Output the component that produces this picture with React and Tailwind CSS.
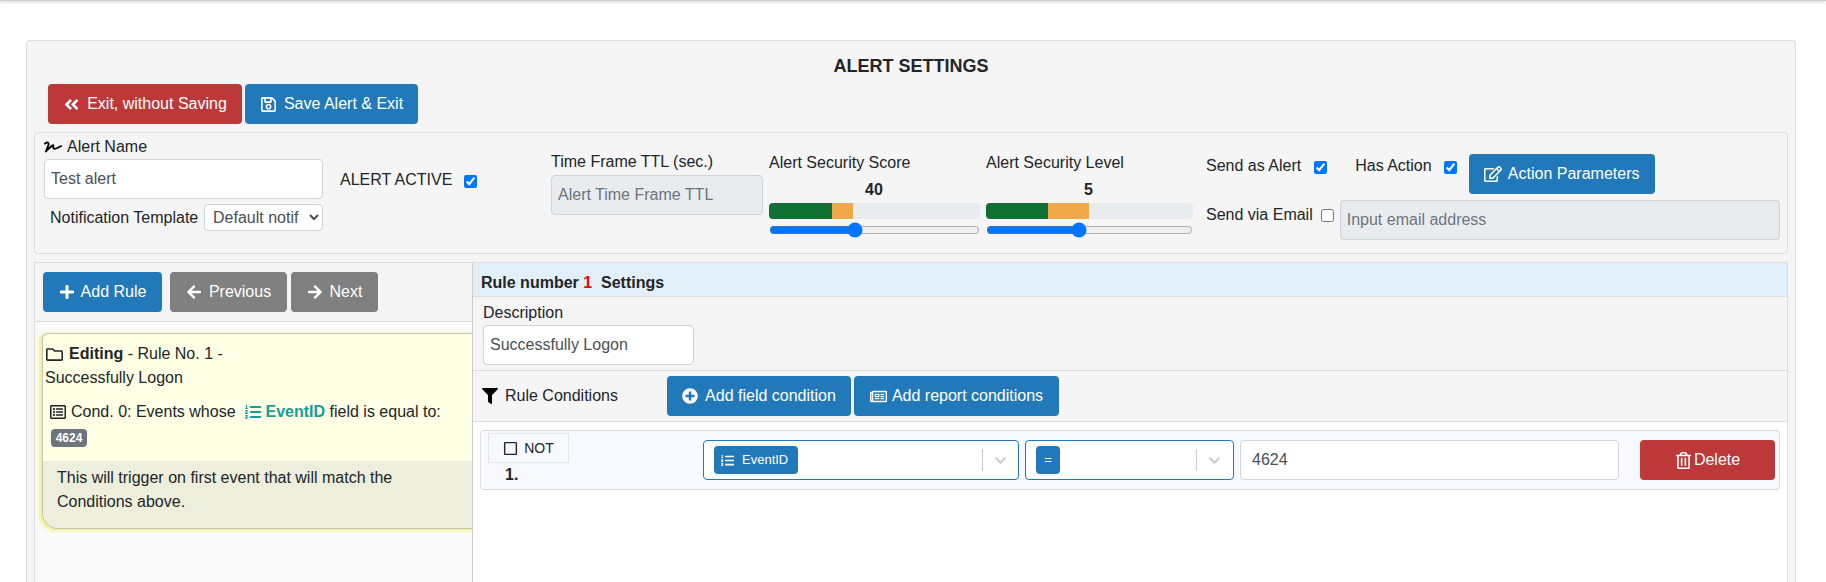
import {
  FaAngleDoubleLeft,
  FaArrowLeft,
  FaArrowRight,
  FaChevronDown,
  FaFilter,
  FaListOl,
  FaPlus,
  FaPlusCircle,
  FaRegEdit,
  FaRegFolder,
  FaRegListAlt,
  FaRegNewspaper,
  FaRegSave,
  FaRegSquare,
  FaRegTrashAlt,
  FaSignature,
} from "react-icons/fa";

const inputClass =
  "h-10 rounded border border-[#ced4da] bg-white px-[6px] text-base text-[#495057] placeholder:text-[#6c757d] disabled:bg-[#e9ecef] outline-none";

function Btn({ color, className = "", children }) {
  return (
    <button className={`flex h-10 items-center justify-center rounded text-white ${color} ${className}`}>
      {children}
    </button>
  );
}

function Score({ label, value, green, orange, min, max, valueClass, className }) {
  return (
    <div className={`flex flex-col pt-[18px] ${className}`}>
      <div className="h-6 leading-6">{label}</div>
      <div className={`mt-[3px] h-6 font-bold leading-6 ${valueClass}`}>{value}</div>
      <div className="mt-[1px] flex h-4 overflow-hidden rounded bg-[#e9ecef]">
        <div className={`bg-[#117035] ${green}`}></div>
        <div className={`bg-[#f0a848] ${orange}`}></div>
      </div>
      <input type="range" min={min} max={max} defaultValue={value} className="mt-[3px] h-4 w-full" />
    </div>
  );
}

function Chip({ children, className = "" }) {
  return (
    <div className={`flex h-7 items-center rounded-sm bg-[#2279ba] text-[13px] text-white ${className}`}>
      {children}
    </div>
  );
}

function PickerEnd({ className = "" }) {
  return (
    <div className={`flex items-center ${className}`}>
      <div className="h-[22px] w-px bg-[#cccccc]"></div>
      <FaChevronDown className="mx-[11px] text-[13px] text-[#cccccc]" />
    </div>
  );
}

export default function App() {
  return (
    <div className="flex h-screen flex-col overflow-hidden bg-white font-['Liberation_Sans',Arial,sans-serif] text-base text-[#212529]">
      <div className="h-px bg-[#d0d0d0] shadow-[0_1px_3px_rgba(0,0,0,0.3)]"></div>

      <div className="ml-[26px] mr-[30px] mt-[39px] flex flex-1 flex-col rounded-t border border-b-0 border-[#dddddd] bg-[#f5f5f5] px-[7px]">
        <h1 className="pt-[13px] pb-[6px] text-center text-lg font-bold leading-6">ALERT SETTINGS</h1>

        <div className="flex gap-[3px] pl-[14px]">
          <Btn color="bg-[#bd3939]" className="w-[194px] gap-[7px]">
            <FaAngleDoubleLeft className="text-[17px]" />
            Exit, without Saving
          </Btn>
          <Btn color="bg-[#2279ba]" className="w-[173px] gap-[7px]">
            <FaRegSave className="text-[17px]" />
            Save Alert &amp; Exit
          </Btn>
        </div>

        {/* alert header */}
        <div className="mt-2 flex h-[122px] rounded border border-[#dddddd] pl-[9px]">
          <div className="w-[279px]">
            <div className="flex h-[26px] items-center gap-[5px] pt-[2px]">
              <FaSignature className="text-[18px] text-black" />
              Alert Name
            </div>
            <input className={`${inputClass} w-full`} defaultValue="Test alert" />
            <div className="mt-[5px] flex items-center justify-between pl-[6px]">
              <span>Notification Template</span>
              <select className="h-[27px] w-[119px] rounded-sm border border-[#ced4da] bg-white pl-1 text-base text-[#495057]">
                <option>Default notif</option>
              </select>
            </div>
          </div>

          <div className="ml-[17px] flex w-[137px] items-start gap-3 pt-[35px]">
            <span className="whitespace-nowrap leading-6">ALERT ACTIVE</span>
            <input type="checkbox" defaultChecked className="mt-[7px] h-[13px] w-[13px] shrink-0" />
          </div>

          <div className="ml-[74px] w-[212px] pt-[17px]">
            <div className="h-6 leading-6">Time Frame TTL (sec.)</div>
            <input disabled placeholder="Alert Time Frame TTL" className={`${inputClass} mt-[1px] w-full`} />
          </div>

          <Score
            label="Alert Security Score"
            value={40}
            min={0}
            max={100}
            green="w-[63px]"
            orange="w-[21px]"
            valueClass="pl-[96px]"
            className="ml-[6px] w-[211px]"
          />
          <Score
            label="Alert Security Level"
            value={5}
            min={1}
            max={10}
            green="w-[62px]"
            orange="w-[41px]"
            valueClass="pl-[98px]"
            className="ml-[6px] w-[207px]"
          />

          <div className="ml-[13px] flex-1 pt-[21px]">
            <div className="flex h-10 items-start">
              <span className="leading-6">Send as Alert</span>
              <input type="checkbox" defaultChecked className="ml-[13px] mt-[7px] h-[13px] w-[13px]" />
              <span className="ml-[28px] leading-6">Has Action</span>
              <input type="checkbox" defaultChecked className="ml-[12px] mt-[7px] h-[13px] w-[13px]" />
              <Btn color="bg-[#2279ba]" className="ml-[12px] w-[186px] gap-[6px]">
                <FaRegEdit className="text-[18px]" />
                Action Parameters
              </Btn>
            </div>
            <div className="mt-[6px] flex items-start pr-[7px]">
              <span className="mt-[3px] leading-6">Send via Email</span>
              <input type="checkbox" className="ml-2 mt-[9px] h-[13px] w-[13px]" />
              <input
                disabled
                placeholder="Input email address"
                className={`${inputClass} ml-[6px] flex-1 rounded-sm`}
              />
            </div>
          </div>
        </div>

        {/* rules */}
        <div className="mt-[8px] flex flex-1 overflow-hidden border border-b-0 border-[#dddddd]">
          <div className="flex w-[438px] shrink-0 flex-col overflow-hidden border-r border-[#cccccc] bg-[#fafafa]">
            <div className="flex h-[59px] shrink-0 items-start border-b border-[#dddddd] bg-[#f5f5f5] pl-2 pt-[9px]">
              <Btn color="bg-[#2279ba]" className="w-[119px] gap-[6px]">
                <FaPlus className="text-[16px]" />
                Add Rule
              </Btn>
              <Btn color="bg-[#808080]" className="ml-2 w-[117px] gap-[7px]">
                <FaArrowLeft className="text-[16px]" />
                Previous
              </Btn>
              <Btn color="bg-[#808080]" className="ml-1 w-[87px] gap-[7px]">
                <FaArrowRight className="text-[16px]" />
                Next
              </Btn>
            </div>

            <div className="ml-[7px] mt-[11px] w-[460px] overflow-hidden rounded-tl-md rounded-bl-2xl border border-r-0 border-[#c4c4b8] bg-[#ffffe6] shadow-[-2px_1px_4px_#f0f060]">
              <div className="pl-[2px] pt-[8px]">
                <div className="flex h-6 items-center pl-[1px]">
                  <FaRegFolder className="mr-[6px] text-[17px]" />
                  <b>Editing</b>
                  <span>&nbsp;- Rule No. 1 -</span>
                </div>
                <div className="h-6 leading-6">Successfully Logon</div>
              </div>
              <div className="mt-[10px] flex h-6 items-center pl-[7px]">
                <FaRegListAlt className="mr-[5px] text-[16px]" />
                <span>Cond. 0: Events whose</span>
                <FaListOl className="ml-[9px] mr-[5px] text-[16px] text-[#149e96]" />
                <b className="text-[#149e96]">EventID</b>
                <span>&nbsp;field is equal to:</span>
              </div>
              <div className="mt-[5px] pb-[14px] pl-[8px]">
                <span className="block h-[18px] w-9 rounded bg-[#6c757d] text-center text-xs font-bold leading-[18px] text-white">
                  4624
                </span>
              </div>
              <div className="h-[67px] bg-[#eeeedd] pl-[14px] pt-[5px] leading-6">
                <div>This will trigger on first event that will match the</div>
                <div>Conditions above.</div>
              </div>
            </div>
          </div>

          <div className="flex flex-1 flex-col bg-white">
            <div className="h-[34px] border-b border-[#dddddd] bg-[#e3eff8] pl-2 pt-2 font-bold leading-6">
              Rule number <span className="text-[#ff0000]">1</span>&nbsp; Settings
            </div>
            <div className="h-[74px] border-b border-[#dddddd] bg-[#f5f5f5] pl-[10px] pt-[4px]">
              <div className="h-6 leading-6">Description</div>
              <input className={`${inputClass} w-[211px]`} defaultValue="Successfully Logon" />
            </div>
            <div className="flex h-[51px] items-start border-b border-[#dddddd] bg-[#f5f5f5] pl-[9px] pt-[5px]">
              <div className="flex h-10 w-[185px] items-center gap-[7px]">
                <FaFilter className="text-[16px] text-black" />
                Rule Conditions
              </div>
              <Btn color="bg-[#2279ba]" className="w-[184px] gap-[7px]">
                <FaPlusCircle className="text-[16px]" />
                Add field condition
              </Btn>
              <Btn color="bg-[#2279ba]" className="ml-[3px] w-[205px] gap-[5px]">
                <FaRegNewspaper className="text-[17px]" />
                Add report conditions
              </Btn>
            </div>

            <div className="ml-[7px] mr-[7px] mt-2 flex h-[60px] items-start rounded-sm border border-[#dddddd] bg-[#f8f8ff] pl-[7px]">
              <div className="mt-[2px] w-[81px]">
                <div className="flex h-[30px] items-center justify-center gap-[6px] border border-[#e6e6e6] text-sm">
                  <FaRegSquare className="text-[15px]" />
                  NOT
                </div>
                <div className="pl-[17px] pt-[1px] font-bold leading-[22px]">1.</div>
              </div>

              <div className="ml-[134px] mt-[9px] flex h-10 w-[316px] items-center justify-between rounded border border-[#2279ba] bg-white pl-[10px]">
                <Chip className="w-[84px] gap-2 pl-[7px]">
                  <FaListOl className="text-[13px]" />
                  EventID
                </Chip>
                <PickerEnd />
              </div>
              <div className="ml-[6px] mt-[9px] flex h-10 w-[209px] items-center justify-between rounded border border-[#2279ba] bg-white pl-[10px]">
                <Chip className="w-6 justify-center">=</Chip>
                <PickerEnd className="pr-px" />
              </div>
              <input className={`${inputClass} ml-[6px] mt-[9px] w-[379px] px-[11px]`} defaultValue="4624" />
              <Btn color="bg-[#bd3939]" className="ml-[21px] mt-[9px] w-[135px] gap-[2px]">
                <FaRegTrashAlt className="text-[17px]" />
                Delete
              </Btn>
            </div>
          </div>
        </div>
      </div>
    </div>
  );
}
